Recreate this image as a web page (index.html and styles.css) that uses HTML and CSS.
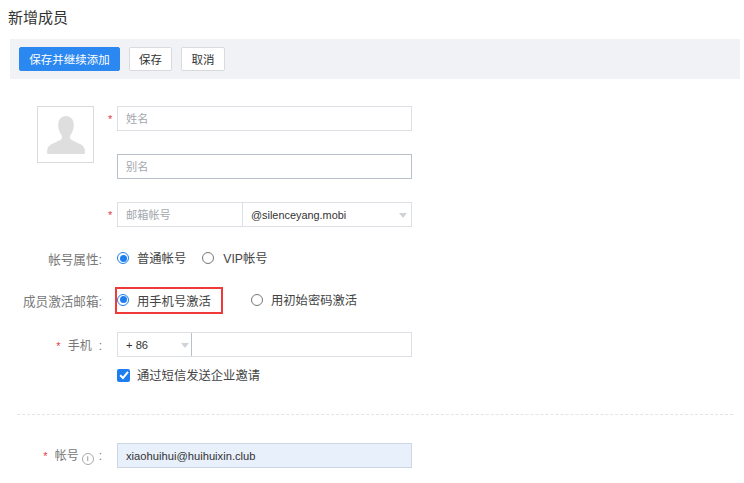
FILE: index.html
```html
<!DOCTYPE html>
<html lang="zh">
<head>
<meta charset="utf-8">
<title>新增成员</title>
<link rel="stylesheet" href="styles.css">
</head>
<body>
<h1 class="title">新增成员</h1>
<div class="toolbar">
  <button class="btn primary">保存并继续添加</button>
  <button class="btn save">保存</button>
  <button class="btn">取消</button>
</div>
<div class="top">
  <div class="avatar">
    <svg width="38" height="38" viewBox="0 0 38 38"><path fill="#dedede" d="M19 0c-4.800 0-7.800 3.500-7.800 9 0 4 1.400 7.500 3.300 10 .8 1.100.8 3.600-.5 4.600-3 2.200-9.500 3.800-12.300 7C.6 31.800 0 33.800 0 36.500c0 .9.500 1.500 1.300 1.500h35.400c.8 0 1.300-.6 1.300-1.500 0-2.700-.6-4.700-1.700-5.900-2.800-3.200-9.300-4.800-12.300-7-1.300-1-1.300-3.500-.5-4.600 1.900-2.500 3.300-6 3.300-10 0-5.500-3-9-7.800-9z"/></svg>
  </div>
  <div class="fields">
    <div class="field"><span class="star">*</span><div class="input placeholder">姓名</div></div>
    <div class="field plain"><div class="input placeholder dark">别名</div></div>
    <div class="field">
      <span class="star">*</span>
      <div class="input group">
        <div class="part mail placeholder">邮箱帐号</div>
        <div class="part domain"><span>@silenceyang.mobi</span><i class="caret"></i></div>
      </div>
    </div>
  </div>
</div>
<div class="row attr">
  <div class="label">帐号属性:</div>
  <div class="radios">
    <span class="radio on"></span><span class="opt">普通帐号</span>
    <span class="radio second"></span><span class="opt vip">VIP帐号</span>
  </div>
</div>
<div class="row activate">
  <div class="label">成员激活邮箱:</div>
  <div class="radios">
    <div class="boxed"><span class="radio on"></span><span class="opt">用手机号激活</span></div>
    <span class="radio third"></span><span class="opt">用初始密码激活</span>
  </div>
</div>
<div class="row phone">
  <div class="label small"><span class="star">*</span>手机<span class="colon">:</span></div>
  <div class="input group">
    <div class="part code"><span>+ 86</span><i class="caret"></i></div>
    <div class="part num"></div>
  </div>
</div>
<div class="row sms">
  <span class="check"><svg width="12" height="12" viewBox="0 0 12 12"><path d="M2.200 6.200 5 9l5-6.200" fill="none" stroke="#fff" stroke-width="2"/></svg></span>
  <span class="opt">通过短信发送企业邀请</span>
</div>
<hr class="divider">
<div class="row account">
  <div class="label small"><span class="star">*</span>帐号<span class="info">i</span><span class="colon tight">:</span></div>
  <div class="input filled">xiaohuihui@huihuixin.club</div>
</div>
</body>
</html>
```
FILE: styles.css
```css
* { box-sizing: border-box; }
html, body { margin: 0; padding: 0; }
body {
  width: 744px; height: 483px; overflow: hidden; background: #fff;
  font-family: "Liberation Sans", "Noto Sans CJK SC", sans-serif;
  font-size: 12px; color: #333;
}
.title { margin: 0; padding: 9px 0 0 8px; height: 39px; font-size: 15px; line-height: 18px; font-weight: 400; color: #333; }
.toolbar {
  margin: 0 0 0 10px; width: 730px; height: 40px; background: #f1f2f6;
  padding: 8px 9px; display: flex; gap: 9px;
}
.btn {
  height: 24px; padding: 0; width: 44px; background: #fff; border: 1px solid #d8dadd; border-radius: 2px;
  font: inherit; font-size: 11.500px; color: #333;
}
.save { width: 43px; }
.primary { width: 101px; background: #2b88f0; border-color: #2b88f0; color: #fff; }
.top { display: flex; margin: 27px 0 0 37px; height: 140px; }
.avatar {
  width: 57px; height: 57px; border: 1px solid #d8dadd;
  display: flex; align-items: center; justify-content: center;
}
.fields { margin-left: 13px; display: flex; flex-direction: column; }
.field { display: flex; height: 25px; margin-bottom: 23px; }
.plain { padding-left: 10px; }
.field .star { width: 10px; padding: 6px 0 0 1px; }
.star { color: #e23c3c; font-size: 11px; line-height: 14px; }
.input {
  width: 295px; height: 25px; border: 1px solid #dcdfe4; background: #fff;
  padding: 0 8px; line-height: 24px; font-size: 11.200px; color: #333;
}
.placeholder { color: #a3a7ad; font-size: 11.200px; }
.dark { border-color: #b9c0cc; }
.group { display: flex; padding: 0; }
.part { display: flex; align-items: center; justify-content: space-between; height: 23px; padding: 0 4px 0 8px; }
.mail { width: 125px; border-right: 1px solid #dcdfe4; }
.domain { flex: 1; font-size: 10.900px; }
.caret {
  width: 0; height: 0; margin-top: 1px;
  border: 4px solid transparent; border-top: 5px solid #d0d3d8; border-bottom: 0;
}
.row { display: flex; align-items: center; }
.label { width: 102px; margin-right: 15px; text-align: right; font-size: 12.600px; color: #777; white-space: nowrap; }
.small { font-size: 12px; }
.colon { margin-left: 7px; }
.colon.tight { margin-left: 2px; }
.attr { height: 24px; }
.radios { display: flex; align-items: center; }
.radio {
  width: 12px; height: 12px; border-radius: 50%; border: 1px solid #777; background: #fff; flex: none; display: flex; align-items: center; justify-content: center;
}
.radio.on { border-color: #1e7ef0; }
.radio.on::after { content: ""; width: 7px; height: 7px; border-radius: 50%; background: #1e7ef0; }
.opt { margin-left: 8px; font-size: 12.300px; color: #444; white-space: nowrap; }
.vip { margin-left: 9px; }
.second { margin-left: 16px; }
.third { margin-left: 28px; }
.activate { margin-top: 18px; height: 24px; }
.boxed {
  display: flex; align-items: center; width: 108px; height: 27px; margin-left: -2px;
  border: 2px solid #f03a3a;
}
.boxed .opt { padding-top: 2px; }
.boxed .radio { margin-top: -1px; }
.phone { margin-top: 20px; }
.phone .star, .account .star { margin-right: 7px; }
.code { width: 74px; border-right: 1px solid #b9c0cc; padding-right: 2px; }
.num { flex: 1; }
.sms { margin: 11px 0 0 117px; height: 14px; }
.check { width: 13px; height: 13px; background: #1e7ef0; border-radius: 2px; display: flex; align-items: center; justify-content: center; }
.sms .opt { margin-left: 7px; }
.divider { margin: 32px 11px 0 17px; border: 0; border-top: 1px dashed #e2e4e8; height: 0; }
.account { margin-top: 28px; }
.info {
  display: inline-block; width: 12px; height: 12px; border: 1px solid #aaa; border-radius: 50%;
  font-size: 8px; line-height: 10px; text-align: center; margin: 0 3px; vertical-align: -1px;
}
.filled { background: #e8f0fb; border-color: #cdd6e4; color: #333; }
```
